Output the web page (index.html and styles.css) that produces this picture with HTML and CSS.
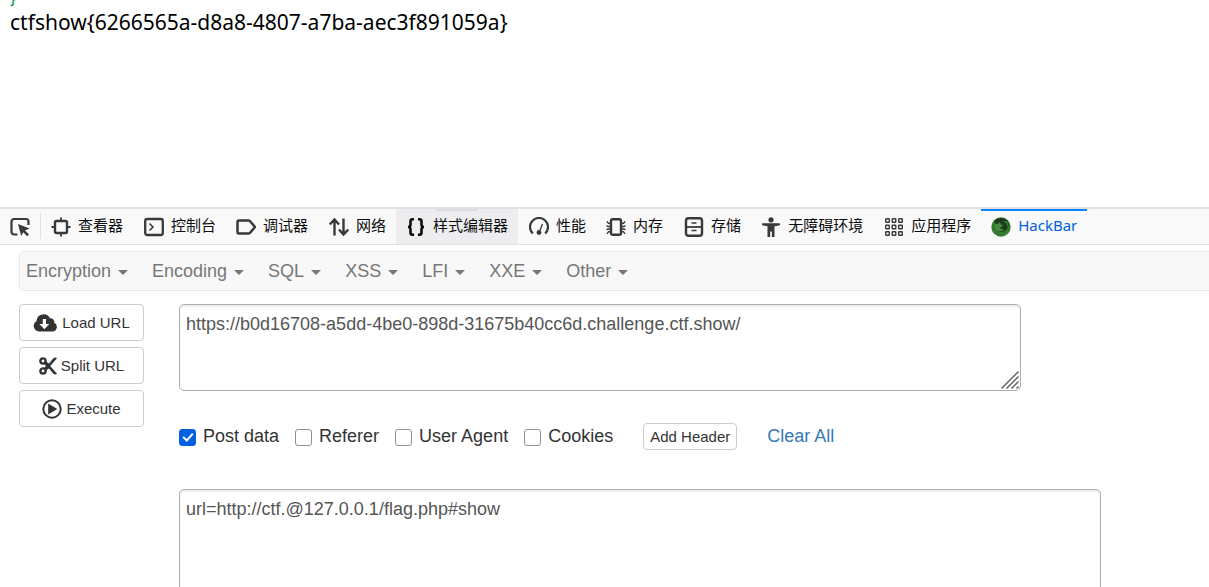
FILE: index.html
```html
<!DOCTYPE html>
<html lang="zh-CN">
  <head>
    <meta charset="UTF-8" />
    <meta name="viewport" content="width=device-width, initial-scale=1.0" />
    <title>HackBar</title>
    <link rel="stylesheet" href="styles.css">
  </head>
  <body>
    <main class="page">
      <div class="code-tail">}</div>
      <p class="flag">ctfshow{6266565a-d8a8-4807-a7ba-aec3f891059a}</p>
    </main>

    <section class="devtools">
      <div class="toolbar">
        <button class="picker" aria-label="Pick element">
          <svg class="icon" viewBox="0 0 20 20"><path d="M7.500 17.500H4a2.500 2.500 0 0 1-2.500-2.500V4.500A2.500 2.500 0 0 1 4 2h12a2.500 2.500 0 0 1 2.500 2.500V8" fill="none" stroke="currentColor" stroke-width="2.200"/><path d="M8 7l11.500 4.500-4.500 2 4 4-1.800 1.800-4-4-2 3.700z" fill="currentColor"/></svg>
        </button>
        <nav class="tabs">
          <button class="tab">
            <svg class="icon" viewBox="0 0 20 20"><rect x="4" y="4" width="12" height="12" rx="1.500" fill="none" stroke="currentColor" stroke-width="2.400"/><path d="M10 .5V4M10 16v3.500M.5 10H4M16 10h3.500" stroke="currentColor" stroke-width="1.800"/></svg>
            <span>查看器</span>
          </button>
          <button class="tab">
            <svg class="icon" viewBox="0 0 20 20"><rect x="1.200" y="2" width="17.600" height="16" rx="2" fill="none" stroke="currentColor" stroke-width="2.300"/><path d="M5.500 6.500L9 10l-3.500 3.500" fill="none" stroke="currentColor" stroke-width="1.500"/></svg>
            <span>控制台</span>
          </button>
          <button class="tab">
            <svg class="icon" viewBox="0 0 20 20"><path d="M3 3.500h9.500c.7 0 1.200.3 1.600.8L19 10l-4.900 5.700c-.4.500-.9.800-1.600.8H3A1.500 1.500 0 0 1 1.500 15V5A1.500 1.500 0 0 1 3 3.500z" fill="none" stroke="currentColor" stroke-width="2.500"/></svg>
            <span>调试器</span>
          </button>
          <button class="tab">
            <svg class="icon" viewBox="0 0 20 20" fill="none" stroke="currentColor" stroke-width="2.400"><path d="M5.500 18.500V3M.8 7.500L5.500 2.500 10 7.500M14.500 1.500V17M10 12.500l4.500 5 4.700-5"/></svg>
            <span>网络</span>
          </button>
          <button class="tab active">
            <svg class="icon" viewBox="0 0 20 20" fill="none" stroke="currentColor" stroke-width="2.600"><path d="M8 2.200H6.500A2 2 0 0 0 4.500 4.200V7.500c0 1.500-.8 2.500-2.500 2.500 1.700 0 2.500 1 2.500 2.500v3.300a2 2 0 0 0 2 2H8M12 2.200h1.500a2 2 0 0 1 2 2V7.500c0 1.500.8 2.500 2.500 2.500-1.700 0-2.500 1-2.500 2.500v3.300a2 2 0 0 1-2 2H12"/></svg>
            <span>样式编辑器</span>
          </button>
          <button class="tab">
            <svg class="icon" viewBox="0 0 20 20"><path d="M3.800 16.500A9 9 0 1 1 16.200 16.500" fill="none" stroke="currentColor" stroke-width="2.200"/><path d="M13.500 7L10.500 14.500" stroke="currentColor" stroke-width="1.300"/><circle cx="10" cy="15.500" r="2.400" fill="currentColor"/></svg>
            <span>性能</span>
          </button>
          <button class="tab">
            <svg class="icon" viewBox="0 0 20 20" fill="none" stroke="currentColor"><rect x="5" y="2.200" width="10" height="15.600" rx="1.800" stroke-width="2.400"/><path d="M4.500 6.500L2.500 6.300.8 4.500M4.500 9.500H2L.5 8.500M4.500 12H2L.5 13M4.500 14.500l-2 .3-1.500 2M15.500 6.500l2-.2 1.700-1.800M15.500 9.500H18l1.500-1M15.500 12H18l1.500 1M15.500 14.500l2 .3 1.500 2" stroke-width="1.300"/></svg>
            <span>内存</span>
          </button>
          <button class="tab">
            <svg class="icon" viewBox="0 0 20 20" fill="none" stroke="currentColor"><rect x="2" y="1.200" width="16" height="17.600" rx="2.500" stroke-width="2.400"/><path d="M2 10h16" stroke-width="1.800"/><path d="M7.500 6h5M7.500 13.500h5" stroke-width="1.500"/></svg>
            <span>存储</span>
          </button>
          <button class="tab">
            <svg class="icon" viewBox="0 0 20 20" fill="currentColor"><circle cx="10" cy="2.800" r="2.600"/><path d="M2 6.200h16a1 1 0 0 1 0 2.300l-4.500.8V20h-2.600v-5.500H9.200V20H6.500V9.300L2 8.500a1 1 0 0 1 0-2.300z"/></svg>
            <span>无障碍环境</span>
          </button>
          <button class="tab">
            <svg class="icon" viewBox="0 0 20 20" fill="none" stroke="currentColor" stroke-width="1.400"><rect x="1.700" y="1.700" width="3.600" height="3.600" rx=".6"/><rect x="8.200" y="1.700" width="3.600" height="3.600" rx=".6"/><rect x="14.700" y="1.700" width="3.600" height="3.600" rx=".6"/><rect x="1.700" y="8.200" width="3.600" height="3.600" rx=".6"/><rect x="8.200" y="8.200" width="3.600" height="3.600" rx=".6"/><rect x="14.700" y="8.200" width="3.600" height="3.600" rx=".6"/><rect x="1.700" y="14.700" width="3.600" height="3.600" rx=".6"/><rect x="8.200" y="14.700" width="3.600" height="3.600" rx=".6"/><rect x="14.700" y="14.700" width="3.600" height="3.600" rx=".6"/></svg>
            <span>应用程序</span>
          </button>
          <button class="tab selected">
            <svg class="icon" viewBox="0 0 20 20"><circle cx="10" cy="10" r="9.700" fill="#347a31"/><path d="M3 4C6 .8 12-.5 16.500 3.500L18 8l-2.500 4.500c-2 2.500-5.500 3-8.500 1.500C4 12.500 2.500 9 4 6z" fill="#1d3a1b"/><path d="M3.500 6.500l3 .5 2.500-2 .8 2.500 2.700 1-2.500 1.500-1 1.800 4 .4c-2 2.800-6 2.600-8 .5-1.500-1.600-2-4.200-1.500-6.200z" fill="#438c3e"/><path d="M12 4l3.500 2.500.5 4 1.500-3-1.500-3.500z" fill="#3b7c37"/></svg>
            <span>HackBar</span>
          </button>
        </nav>
      </div>

      <div class="menu">
        <button class="menu-item">Encryption</button>
        <button class="menu-item">Encoding</button>
        <button class="menu-item">SQL</button>
        <button class="menu-item">XSS</button>
        <button class="menu-item">LFI</button>
        <button class="menu-item">XXE</button>
        <button class="menu-item">Other</button>
      </div>

      <div class="hackbar">
        <div class="actions">
          <button class="btn">
            <svg class="cloud" viewBox="0 0 25 18"><path d="M6 17.500A5.700 5.700 0 0 1 3.500 6.900 7.200 7.200 0 0 1 17 4.200a3.800 3.800 0 0 1 4.200 4.600A4.600 4.600 0 0 1 20 17.500z" fill="currentColor"/><path d="M9.800 5h3.200v5h3.300l-4.900 5.300L6.500 10h3.300z" fill="#fff"/></svg>
            Load URL
          </button>
          <button class="btn">
            <svg class="scissors" viewBox="0 0 18 18"><g fill="none" stroke="currentColor"><circle cx="4" cy="4" r="2.600" stroke-width="2.400"/><circle cx="4" cy="14" r="2.600" stroke-width="2.400"/></g><path d="M5.500 7.500L7 4.500l3 2L14.200 1.600C15.500.2 17 .4 18 1.300L11.200 9l6.800 7.700c-1 .9-2.500 1.100-3.800-.3L10 11.500l-3 2-1.500-3L7 9z" fill="currentColor"/></svg>
            Split URL
          </button>
          <button class="btn">
            <svg class="play" viewBox="0 0 20 20"><circle cx="10" cy="10" r="8.700" fill="none" stroke="currentColor" stroke-width="2"/><path d="M6.200 4.500L15.200 10l-9 5.500z" fill="currentColor"/></svg>
            Execute
          </button>
        </div>

        <div class="fields">
          <div class="url-box">
            <textarea class="field url" aria-label="URL" spellcheck="false">https://b0d16708-a5dd-4be0-898d-31675b40cc6d.challenge.ctf.show/</textarea>
            <svg class="grip" viewBox="0 0 18 18"><path d="M.5 17.500l17-17M5.500 17.500l12-12M10.500 17.500l7-7M15.500 17.500l2-2" stroke="#666" stroke-width="1.500"/></svg>
          </div>
          <div class="options">
            <label class="check"><input type="checkbox" checked />Post data</label>
            <label class="check"><input type="checkbox" />Referer</label>
            <label class="check"><input type="checkbox" />User Agent</label>
            <label class="check"><input type="checkbox" />Cookies</label>
            <button class="btn small">Add Header</button>
            <a class="clear" href="#">Clear All</a>
          </div>
          <textarea class="field post" aria-label="Post data" spellcheck="false">url=http://ctf.@127.0.0.1/flag.php#show</textarea>
        </div>
      </div>
    </section>
  </body>
</html>
```
FILE: styles.css
```css
* {
  box-sizing: border-box;
}
body {
  margin: 0;
  height: 100vh;
  display: flex;
  flex-direction: column;
  overflow: hidden;
  background: #fff;
  color: #333;
  font-family: "Liberation Sans", Arial, sans-serif;
}
button,
textarea {
  font-family: inherit;
  margin: 0;
}

/* page content */
.page {
  flex: 1;
  padding: 0 10px;
  color: #000;
  font-family: "Noto Sans", "Noto Sans CJK SC", sans-serif;
  font-size: 21px;
  overflow: hidden;
}
.code-tail {
  display: flex;
  align-items: flex-end;
  height: 8px;
  overflow: hidden;
  color: #009a4e;
  font-size: 16px;
  line-height: 20px;
}
.flag {
  margin: 0;
  line-height: 28px;
}

/* devtools */
.devtools {
  flex: 0 0 380px;
  border-top: 2px solid #e0e0e2;
  overflow: hidden;
}
.toolbar {
  display: flex;
  height: 36px;
  background: #f9f9fa;
  border-bottom: 1px solid #e0e0e2;
}
.picker,
.tab {
  border: none;
  background: none;
  color: #38383d;
}
.picker {
  display: flex;
  align-items: center;
  padding: 0 11px 0 10px;
  position: relative;
}
.picker::after {
  content: "";
  position: absolute;
  right: 0;
  top: 4px;
  bottom: 5px;
  width: 1px;
  background: #e0e0e2;
}
.icon {
  width: 20px;
  height: 20px;
  flex: none;
}
.tabs {
  display: flex;
}
.tab {
  display: flex;
  align-items: center;
  gap: 7px;
  padding: 0 10px;
  color: #0c0c0d;
  font-family: "Noto Sans", "Noto Sans CJK SC", sans-serif;
  font-size: 15px;
  white-space: nowrap;
}
.tab:nth-child(even) {
  margin-left: 1px;
}
.tab span {
  padding-bottom: 4px;
}
.tab .icon {
  color: #38383d;
}
.tab.active {
  position: relative;
  background: #ededf0;
}
.tab.active::before {
  content: "";
  position: absolute;
  top: 0;
  left: 40px;
  right: 40px;
  height: 2px;
  background: #dcdcdf;
}
.tab.active .icon {
  color: #0c0c0d;
}
.tab.selected {
  color: #0060df;
  box-shadow: inset 0 2px #0a84ff;
}

/* menu bar */
.menu {
  display: flex;
  gap: 24px;
  height: 40px;
  margin: 6px 0 0 19px;
  padding: 0 6px;
  background: #f8f8f8;
  border: 1px solid #e7e7e7;
  border-right: none;
  border-radius: 5px 0 0 5px;
}
.menu-item {
  display: flex;
  align-items: center;
  gap: 7px;
  padding: 0;
  border: none;
  background: none;
  color: #777;
  font-size: 18px;
}
.menu-item::after {
  content: "";
  margin-top: 3px;
  border: 5px solid transparent;
  border-top-color: #777;
  border-bottom: none;
}

/* form */
.hackbar {
  display: flex;
  gap: 35px;
  padding: 13px 108px 0 19px;
}
.actions {
  display: flex;
  flex-direction: column;
  gap: 6px;
  flex: 0 0 125px;
}
.btn {
  display: flex;
  align-items: center;
  justify-content: center;
  gap: 4px;
  height: 37px;
  padding: 0 6px;
  border: 1px solid #ccc;
  border-radius: 4px;
  background: #fff;
  color: #333;
  font-size: 15px;
}
.cloud {
  width: 25px;
  height: 18px;
}
.scissors {
  width: 18px;
  height: 18px;
}
.play {
  width: 20px;
  height: 20px;
}
.fields {
  flex: 1;
}
.url-box {
  position: relative;
  margin-right: 80px;
}
.field {
  display: block;
  width: 100%;
  padding: 6px;
  border: 1px solid #b0b0b0;
  border-radius: 5px;
  box-shadow: inset 0 1px 2px rgba(0, 0, 0, 0.12);
  color: #555;
  font-size: 18px;
  line-height: 26px;
  resize: none;
}
.url {
  height: 87px;
}
.post {
  height: 130px;
}
.grip {
  position: absolute;
  right: 2px;
  bottom: 2px;
  width: 18px;
  height: 18px;
  pointer-events: none;
}
.options {
  display: flex;
  align-items: center;
  height: 27px;
  margin: 32px 0 39px;
  font-size: 18px;
}
.check {
  display: flex;
  align-items: center;
  gap: 7px;
  margin-right: 16px;
}
.check input {
  appearance: none;
  position: relative;
  width: 17px;
  height: 17px;
  margin: 2px 0 0;
  border: 1px solid #8f8f9d;
  border-radius: 3px;
}
.check input:checked {
  background: #0060df;
  border-color: #0060df;
}
.check input:checked::after {
  content: "";
  position: absolute;
  left: 5px;
  top: 1px;
  width: 4px;
  height: 8px;
  border: solid #fff;
  border-width: 0 2px 2px 0;
  transform: rotate(42deg);
}
.btn.small {
  height: 27px;
  margin: 0 30px 0 14px;
}
.clear {
  color: #337ab7;
  text-decoration: none;
}
```
